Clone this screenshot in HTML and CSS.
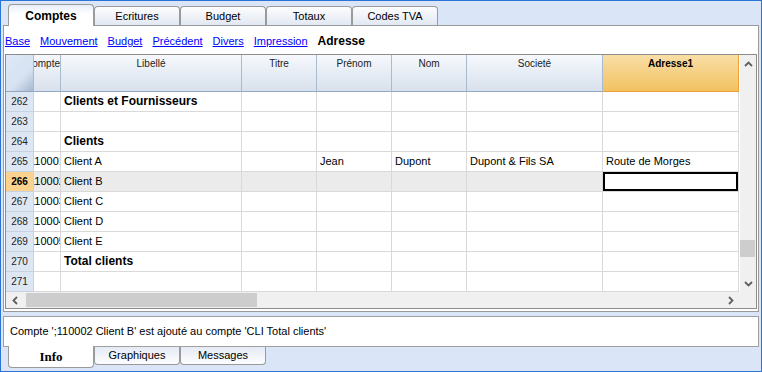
FILE: index.html
```html
<!DOCTYPE html>
<html lang="fr">
<head>
    <meta charset="UTF-8">
    <title>Comptes - Adresse</title>
    <link rel="stylesheet" href="styles.css">
</head>
<body>
    <div class="window">
        <div class="tabs tabs-top">
            <div class="tab active">Comptes</div>
            <div class="tab">Ecritures</div>
            <div class="tab">Budget</div>
            <div class="tab">Totaux</div>
            <div class="tab">Codes TVA</div>
        </div>

        <div class="panel">
            <nav class="subnav">
                <a href="#">Base</a>
                <a href="#">Mouvement</a>
                <a href="#">Budget</a>
                <a href="#">Précédent</a>
                <a href="#">Divers</a>
                <a href="#">Impression</a>
                <span class="current">Adresse</span>
            </nav>

            <div class="grid">
                <div class="grid-body">
                    <div class="sheet">
                        <div class="hd corner"></div>
                        <div class="hd clip"><span>Compte</span></div>
                        <div class="hd">Libellé</div>
                        <div class="hd">Titre</div>
                        <div class="hd">Prénom</div>
                        <div class="hd">Nom</div>
                        <div class="hd">Societé</div>
                        <div class="hd hd-active">Adresse1</div>

                        <div class="rn">262</div>
                        <div class="c clip"></div>
                        <div class="c b">Clients et Fournisseurs</div>
                        <div class="c"></div>
                        <div class="c"></div>
                        <div class="c"></div>
                        <div class="c"></div>
                        <div class="c"></div>

                        <div class="rn">263</div>
                        <div class="c clip"></div>
                        <div class="c"></div>
                        <div class="c"></div>
                        <div class="c"></div>
                        <div class="c"></div>
                        <div class="c"></div>
                        <div class="c"></div>

                        <div class="rn">264</div>
                        <div class="c clip"></div>
                        <div class="c b">Clients</div>
                        <div class="c"></div>
                        <div class="c"></div>
                        <div class="c"></div>
                        <div class="c"></div>
                        <div class="c"></div>

                        <div class="rn">265</div>
                        <div class="c clip"><span>110001</span></div>
                        <div class="c">Client A</div>
                        <div class="c"></div>
                        <div class="c">Jean</div>
                        <div class="c">Dupont</div>
                        <div class="c">Dupont &amp; Fils SA</div>
                        <div class="c">Route de Morges</div>

                        <div class="rn sel">266</div>
                        <div class="c clip sel"><span>110002</span></div>
                        <div class="c sel">Client B</div>
                        <div class="c sel"></div>
                        <div class="c sel"></div>
                        <div class="c sel"></div>
                        <div class="c sel"></div>
                        <div class="c cur"></div>

                        <div class="rn">267</div>
                        <div class="c clip"><span>110003</span></div>
                        <div class="c">Client C</div>
                        <div class="c"></div>
                        <div class="c"></div>
                        <div class="c"></div>
                        <div class="c"></div>
                        <div class="c"></div>

                        <div class="rn">268</div>
                        <div class="c clip"><span>110004</span></div>
                        <div class="c">Client D</div>
                        <div class="c"></div>
                        <div class="c"></div>
                        <div class="c"></div>
                        <div class="c"></div>
                        <div class="c"></div>

                        <div class="rn">269</div>
                        <div class="c clip"><span>110005</span></div>
                        <div class="c">Client E</div>
                        <div class="c"></div>
                        <div class="c"></div>
                        <div class="c"></div>
                        <div class="c"></div>
                        <div class="c"></div>

                        <div class="rn">270</div>
                        <div class="c clip"></div>
                        <div class="c b">Total clients</div>
                        <div class="c"></div>
                        <div class="c"></div>
                        <div class="c"></div>
                        <div class="c"></div>
                        <div class="c"></div>

                        <div class="rn">271</div>
                        <div class="c clip"></div>
                        <div class="c"></div>
                        <div class="c"></div>
                        <div class="c"></div>
                        <div class="c"></div>
                        <div class="c"></div>
                        <div class="c"></div>
                    </div>

                    <div class="vscroll">
                        <div class="sb-btn">
                            <svg width="9" height="6" viewBox="0 0 9 6"><polyline points="1,5 4.5,1.5 8,5" fill="none" stroke="#606060" stroke-width="1.8"/></svg>
                        </div>
                        <div class="sb-track">
                            <div class="thumb-v"></div>
                        </div>
                        <div class="sb-btn">
                            <svg width="9" height="6" viewBox="0 0 9 6"><polyline points="1,1 4.5,4.5 8,1" fill="none" stroke="#606060" stroke-width="1.8"/></svg>
                        </div>
                    </div>
                </div>

                <div class="hscroll-row">
                    <div class="hscroll">
                        <div class="sb-btn">
                            <svg width="6" height="9" viewBox="0 0 6 9"><polyline points="5,1 1.5,4.5 5,8" fill="none" stroke="#606060" stroke-width="1.8"/></svg>
                        </div>
                        <div class="sb-track">
                            <div class="thumb-h"></div>
                        </div>
                        <div class="sb-btn">
                            <svg width="6" height="9" viewBox="0 0 6 9"><polyline points="1,1 4.5,4.5 1,8" fill="none" stroke="#606060" stroke-width="1.8"/></svg>
                        </div>
                    </div>
                    <div class="sb-corner"></div>
                </div>
            </div>
        </div>

        <div class="status">Compte ';110002 Client B' est ajouté au compte 'CLI Total clients'</div>

        <div class="tabs tabs-bottom">
            <div class="tab active">Info</div>
            <div class="tab">Graphiques</div>
            <div class="tab">Messages</div>
        </div>
    </div>
</body>
</html>
```

FILE: styles.css
```css
body {
    margin: 0;
    font-family: 'Liberation Sans', Arial, sans-serif;
    font-size: 11px;
    color: #000;
}

.window {
    width: 762px;
    height: 372px;
    box-sizing: border-box;
    border: 1px solid #2b74d3;
    background-color: #dae5f7;
    display: flex;
    flex-direction: column;
    overflow: hidden;
}

/* tabs */

.tabs {
    display: flex;
    padding-left: 7px;
}

.tab {
    width: 86px;
    box-sizing: border-box;
    text-align: center;
    color: #000;
}

.tabs-top {
    height: 24px;
    align-items: flex-end;
}

.tabs-top .tab {
    height: 19px;
    line-height: 19px;
    border: 1px solid #9a9a9a;
    border-bottom: none;
    border-radius: 4px 4px 0 0;
    background: linear-gradient(#fdfdfe, #e2e8f2);
}

.tabs-top .tab.active {
    height: 22px;
    line-height: 22px;
    margin-bottom: -1px;
    font-size: 12px;
    font-weight: bold;
    background: linear-gradient(#e9eff9, #ffffff 45%);
    position: relative;
    z-index: 1;
}

.tabs-bottom {
    align-items: flex-start;
}

.tabs-bottom .tab {
    height: 18px;
    line-height: 16px;
    margin-top: 0;
    border: 1px solid #9a9a9a;
    border-top: none;
    border-radius: 0 0 4px 4px;
    background: linear-gradient(#e4eaf4, #fdfdfe);
}

.tabs-bottom .tab.active {
    height: 22px;
    line-height: 22px;
    margin-top: -1px;
    font-family: 'Liberation Serif', 'Times New Roman', serif;
    font-size: 13px;
    font-weight: bold;
    background: #fff;
    position: relative;
    z-index: 1;
}

/* main panel */

.panel {
    height: 287px;
    box-sizing: border-box;
    margin: 0 2px;
    border: 1px solid #9a9a9a;
    background-color: #fff;
    padding: 0 1px 2px;
}

.subnav {
    height: 28px;
    display: flex;
    align-items: center;
    gap: 10px;
    padding-top: 2px;
    box-sizing: border-box;
}

.subnav a {
    color: #0000ff;
    text-decoration: underline;
}

.subnav .current {
    font-size: 12px;
    font-weight: bold;
}

/* grid */

.grid {
    height: 255px;
    box-sizing: border-box;
    border: 1px solid #8c8c8c;
}

.grid-body {
    display: flex;
}

.sheet {
    width: 733px;
    display: grid;
    grid-template-columns: 28px 27px 181px 75px 75px 75px 136px 136px;
    grid-template-rows: 37px repeat(10, 20px);
}

.sheet > div {
    box-sizing: border-box;
    border-right: 1px solid #d9d9d9;
    border-bottom: 1px solid #d9d9d9;
    overflow: hidden;
    white-space: nowrap;
}

.hd {
    background: linear-gradient(#f6f8fc, #d8e1ed);
    font-size: 10px;
    line-height: 12px;
    padding-top: 3px;
    text-align: center;
    color: #222;
}

.sheet > .hd {
    border-right-color: #a9bbd0;
    border-bottom-color: #93a7c1;
}

.hd.corner {
    background: linear-gradient(135deg, #dfe9f7 0%, #d6e2f2 62%, #a6b8cf 100%);
}

.sheet > .hd-active {
    background: linear-gradient(#f9dea6, #f1c261);
    border-right-color: #f0a136;
    border-bottom-color: #f0a136;
    font-weight: bold;
    color: #000;
}

.hd.clip {
    display: flex;
    justify-content: flex-end;
    align-items: flex-start;
}

.c {
    padding: 0 3px;
    line-height: 19px;
}

.c.b {
    font-size: 12px;
    font-weight: bold;
}

.c.clip {
    display: flex;
    justify-content: center;
    padding: 0;
}

.c.sel {
    background-color: #ebebeb;
}

.c.cur {
    background-color: #fff;
    box-shadow: inset 0 0 0 2px #000;
}

.sheet > .rn {
    background-color: #dde7f4;
    border-right-color: #c6d2e2;
    border-bottom-color: #c6d2e2;
    font-size: 10px;
    line-height: 20px;
    text-align: center;
    color: #222;
}

.sheet > .rn.sel {
    background-color: #fbd28e;
    font-weight: bold;
    color: #000;
}

/* scrollbars */

.vscroll {
    width: 17px;
    box-sizing: border-box;
    border-left: 1px solid #fff;
    background-color: #f0f0f0;
    display: flex;
    flex-direction: column;
}

.vscroll .sb-btn {
    height: 17px;
    display: flex;
    align-items: center;
    justify-content: center;
}

.vscroll .sb-track {
    flex: 1;
}

.thumb-v {
    margin-top: 168px;
    height: 17px;
    width: 15px;
    background-color: #cdcdcd;
}

.hscroll-row {
    display: flex;
    height: 16px;
}

.hscroll {
    width: 733px;
    background-color: #f0f0f0;
    display: flex;
}

.hscroll .sb-btn {
    width: 17px;
    display: flex;
    align-items: center;
    justify-content: center;
}

.hscroll .sb-track {
    flex: 1;
    padding: 1px 0 0 3px;
}

.thumb-h {
    width: 231px;
    height: 14px;
    background-color: #cdcdcd;
}

.sb-corner {
    flex: 1;
    background-color: #f0f0f0;
}

/* info */

.status {
    height: 31px;
    box-sizing: border-box;
    margin: 4px 2px 0;
    border: 1px solid #a0a0a0;
    background-color: #fff;
    padding-left: 6px;
    line-height: 29px;
}
```
